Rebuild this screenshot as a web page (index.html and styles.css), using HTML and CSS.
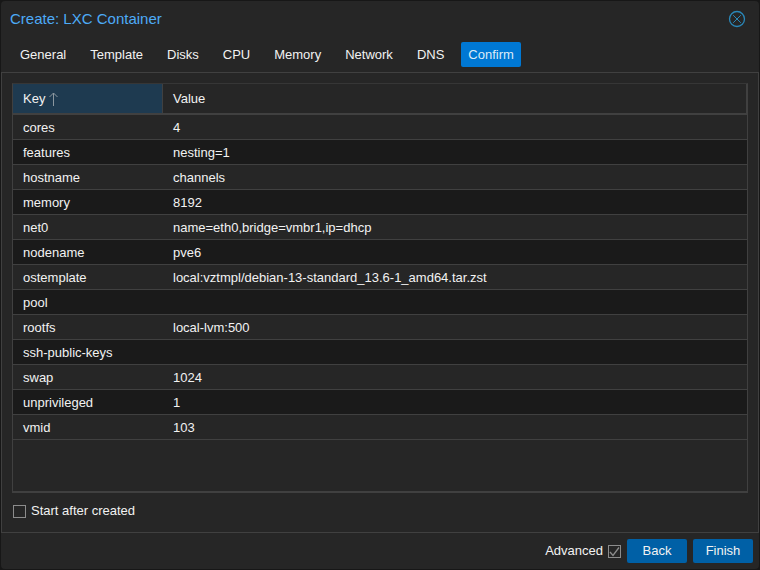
FILE: index.html
```html
<!DOCTYPE html>
<html lang="en">
<head>
    <meta charset="UTF-8">
    <meta name="viewport" content="width=device-width, initial-scale=1.0">
    <title>Create: LXC Container</title>
    <link rel="stylesheet" href="styles.css">
</head>
<body>
    <div class="window">
        <header class="window-header">
            <h1>Create: LXC Container</h1>
            <button type="button" class="close-btn" aria-label="Close">
                <svg width="18" height="18" viewBox="0 0 18 18" fill="none" stroke="currentColor">
                    <circle cx="9" cy="9" r="7.5" stroke-width="1.3"/>
                    <path d="M5.2 5.2l7.6 7.6M12.8 5.2l-7.6 7.6" stroke-width="1"/>
                </svg>
            </button>
        </header>

        <nav class="tabs">
            <button type="button" class="tab">General</button>
            <button type="button" class="tab">Template</button>
            <button type="button" class="tab">Disks</button>
            <button type="button" class="tab">CPU</button>
            <button type="button" class="tab">Memory</button>
            <button type="button" class="tab">Network</button>
            <button type="button" class="tab">DNS</button>
            <button type="button" class="tab active">Confirm</button>
        </nav>

        <main class="panel">
            <div class="grid">
                <table>
                    <thead>
                        <tr>
                            <th class="key sorted">Key
                                <svg width="10" height="14" viewBox="0 0 10 14" fill="none" stroke="currentColor">
                                    <path d="M4.5 14V1M.5 5L4.5 1L8.5 5"/>
                                </svg>
                            </th>
                            <th>Value</th>
                        </tr>
                    </thead>
                    <tbody>
                        <tr><td>cores</td><td>4</td></tr>
                        <tr><td>features</td><td>nesting=1</td></tr>
                        <tr><td>hostname</td><td>channels</td></tr>
                        <tr><td>memory</td><td>8192</td></tr>
                        <tr><td>net0</td><td>name=eth0,bridge=vmbr1,ip=dhcp</td></tr>
                        <tr><td>nodename</td><td>pve6</td></tr>
                        <tr><td>ostemplate</td><td>local:vztmpl/debian-13-standard_13.6-1_amd64.tar.zst</td></tr>
                        <tr><td>pool</td><td></td></tr>
                        <tr><td>rootfs</td><td>local-lvm:500</td></tr>
                        <tr><td>ssh-public-keys</td><td></td></tr>
                        <tr><td>swap</td><td>1024</td></tr>
                        <tr><td>unprivileged</td><td>1</td></tr>
                        <tr><td>vmid</td><td>103</td></tr>
                    </tbody>
                </table>
            </div>
            <label class="check"><input type="checkbox" id="start"> Start after created</label>
        </main>

        <footer class="window-footer">
            <label class="check"><span>Advanced</span> <input type="checkbox" id="advanced" checked></label>
            <button type="button" class="btn">Back</button>
            <button type="button" class="btn">Finish</button>
        </footer>
    </div>
</body>
</html>
```

FILE: styles.css
```css
:root {
    --bg: #262626;
    --bg-alt: #1a1a1a;
    --border-color: #404040;
    --text-color: #f2f2f2;
    --title-color: #4dabf7;
    --sorted-bg: #1e3a50;
    --tab-active: #0078d4;
    --btn-bg: #0060a6;
}

* {
    margin: 0;
    padding: 0;
    box-sizing: border-box;
}

body {
    font-family: "Liberation Sans", Arial, sans-serif;
    font-size: 13px;
    line-height: 16px;
    color: var(--text-color);
    background-color: #171717;
    height: 100vh;
    padding: 1px;
}

button {
    font: inherit;
    color: inherit;
    border: none;
    background: none;
    cursor: pointer;
}

.window {
    display: flex;
    flex-direction: column;
    height: 100%;
    background-color: var(--bg);
    border-radius: 4px;
}

.window-header {
    display: flex;
    align-items: center;
    justify-content: space-between;
    height: 35px;
    padding: 0 13px 0 9px;
}

.window-header h1 {
    font-size: 15px;
    line-height: 18px;
    font-weight: normal;
    color: var(--title-color);
}

.close-btn {
    display: flex;
    color: #2a87b8;
}

.tabs {
    display: flex;
    gap: 10px;
    padding: 6px 12px 5px;
}

.tab {
    height: 25px;
    padding: 0 7px;
    border-radius: 2px;
}

.tab.active {
    background-color: var(--tab-active);
    color: #dcebf7;
}

.panel {
    display: flex;
    flex: 1;
    flex-direction: column;
    gap: 10px;
    padding: 10px 10px 13px;
    border: 1px solid var(--border-color);
}

.grid {
    flex: 1;
    border: 1px solid var(--border-color);
    border-top-color: #363636;
    border-bottom-width: 2px;
}

table {
    width: 100%;
    table-layout: fixed;
    border-collapse: separate;
    border-spacing: 0;
}

th,
td {
    padding: 0 10px;
    text-align: left;
    font-weight: normal;
}

th {
    height: 31px;
    border-right: 1px solid var(--border-color);
    border-bottom: 2px solid var(--border-color);
}

th.key {
    width: 150px;
}

th.sorted {
    background-color: var(--sorted-bg);
}

th svg {
    color: #8b979f;
    vertical-align: -3px;
}

td {
    height: 25px;
    padding-top: 2px;
    border-bottom: 1px solid var(--border-color);
}

tbody tr:nth-child(even) {
    background-color: var(--bg-alt);
}

.check {
    display: flex;
    align-items: center;
    gap: 5px;
}

.panel .check {
    padding-left: 1px;
}

.check input {
    appearance: none;
    width: 13px;
    height: 13px;
    border: 1px solid #8c8c8c;
}

.check input:checked {
    background: url("data:image/svg+xml,%3Csvg xmlns='http://www.w3.org/2000/svg' viewBox='0 0 11 11'%3E%3Cpath d='M1 6l3 3.5L10 1.5' fill='none' stroke='%238c8c8c' stroke-width='1.3'/%3E%3C/svg%3E") center / 11px 11px no-repeat;
}

.window-footer {
    display: flex;
    align-items: center;
    justify-content: flex-end;
    gap: 6px;
    height: 36px;
    padding: 0 6px;
}

.btn {
    width: 60px;
    height: 24px;
    border-radius: 2px;
    background-color: var(--btn-bg);
}
```
